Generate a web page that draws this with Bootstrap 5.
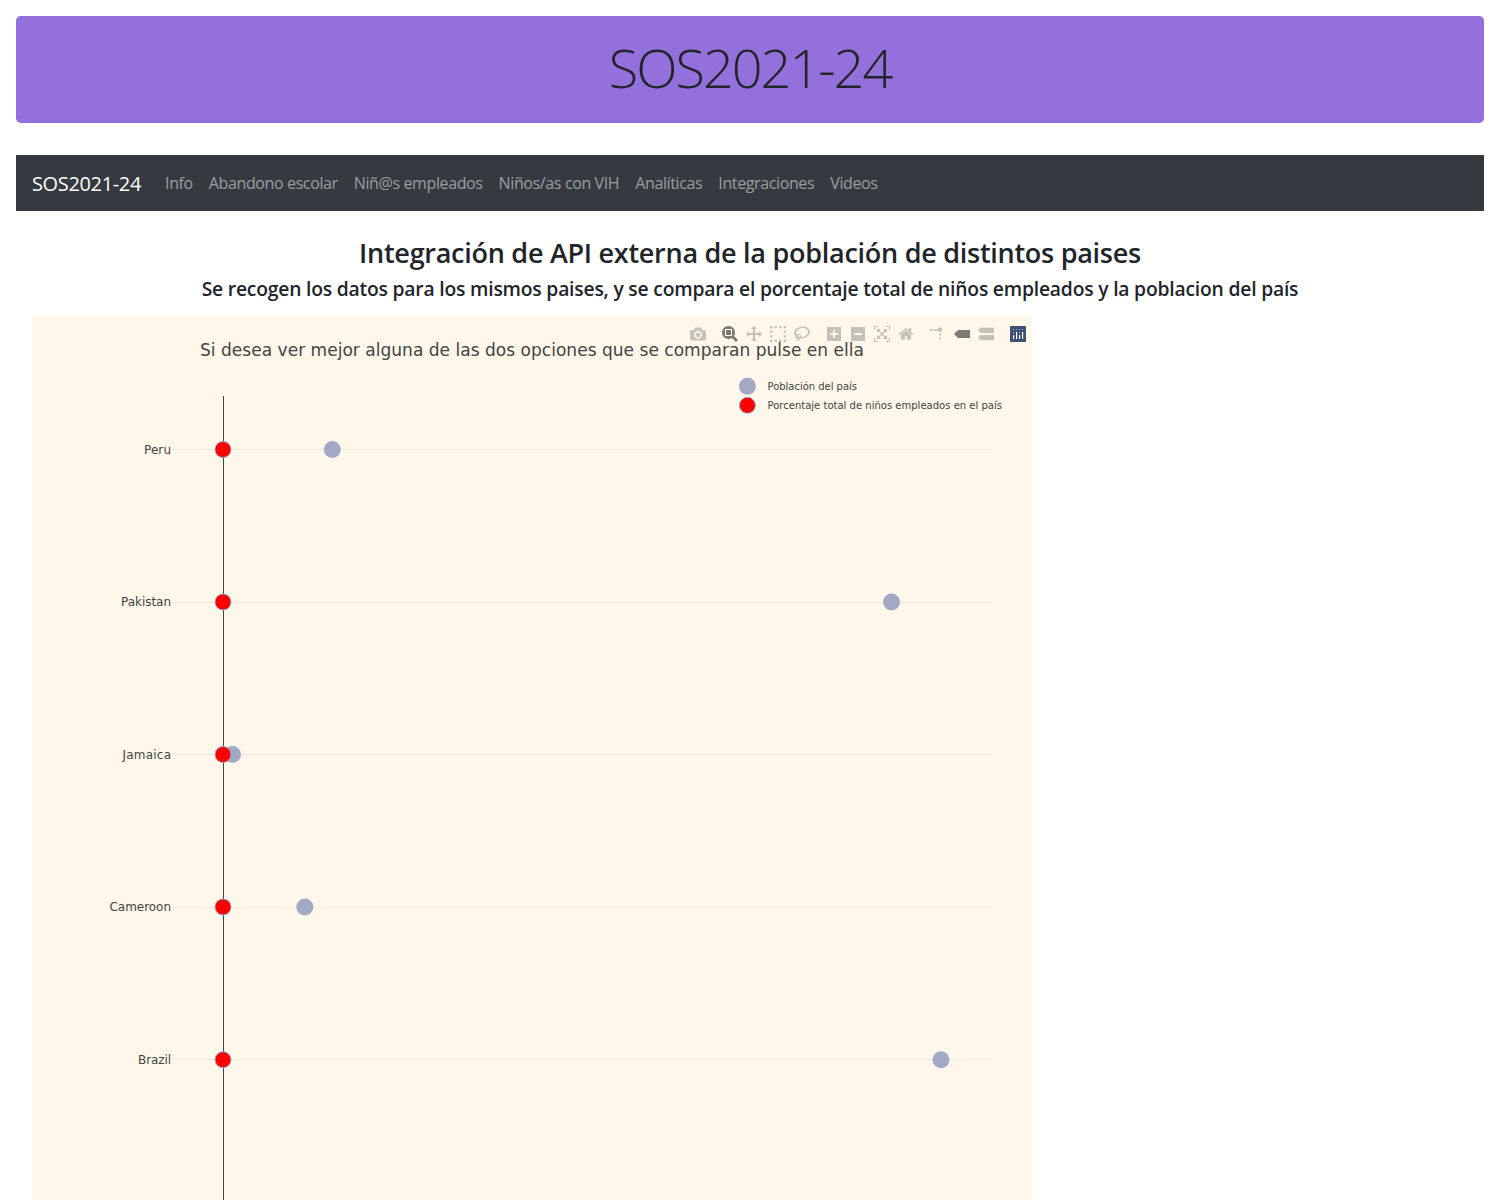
<!DOCTYPE html>
<html lang="es">
<head>
<meta charset="utf-8">
<meta name="viewport" content="width=device-width, initial-scale=1">
<title>SOS2021-24</title>
<link href="https://cdn.jsdelivr.net/npm/bootstrap@5.3.0/dist/css/bootstrap.min.css" rel="stylesheet">
<style>
body{font-family:"Segoe UI","Open Sans","Noto Sans",sans-serif;color:#212529;height:1200px;overflow:hidden}
.hero{background:#9370db;height:107px;border-radius:4.8px;margin-bottom:32px;padding-top:18px}
.hero h1{font-size:54px;font-weight:300;line-height:67px;letter-spacing:-2px}
.topbar{background:#343a40;height:56px}
.topbar .navbar-brand{font-size:20px;letter-spacing:-.35px;margin-right:16px;padding-top:6px;padding-bottom:4px}
.topbar .nav-link{color:rgba(255,255,255,.5);letter-spacing:-.38px;padding-top:8px;padding-bottom:8px}
.content{padding:25px 16px 0}
.content h3{font-size:27px;line-height:33.6px;font-weight:600;letter-spacing:-.27px;margin-bottom:7.4px}
.content h5{font-size:19.3px;line-height:24px;font-weight:600;letter-spacing:-.2px;margin-bottom:15px}
.chart{width:1000px;height:884px;background:#fef7ea}
.chart text{font-family:Verdana,"DejaVu Sans",sans-serif;fill:#444}
.modebar{top:10px;right:6px;gap:16px}
.modebar svg{width:16px;height:16px;display:block;fill:rgba(68,68,68,.3)}
.modebar .group{display:flex;gap:8px}
.modebar svg.on{fill:rgba(68,68,68,.7)}
</style>
<script src="https://cdn.jsdelivr.net/npm/bootstrap@5.3.0/dist/js/bootstrap.bundle.min.js"></script>
</head>
<body class="p-3">
<header class="hero d-flex justify-content-center"><h1 class="m-0">SOS2021-24</h1></header>
<nav class="topbar navbar navbar-expand navbar-dark px-3 py-2">
  <a class="navbar-brand" href="#">SOS2021-24</a>
  <ul class="navbar-nav">
    <li class="nav-item"><a class="nav-link" href="#">Info</a></li>
    <li class="nav-item"><a class="nav-link" href="#">Abandono escolar</a></li>
    <li class="nav-item"><a class="nav-link" href="#">Niñ@s empleados</a></li>
    <li class="nav-item"><a class="nav-link" href="#">Niños/as con VIH</a></li>
    <li class="nav-item"><a class="nav-link" href="#">Analíticas</a></li>
    <li class="nav-item"><a class="nav-link" href="#">Integraciones</a></li>
    <li class="nav-item"><a class="nav-link" href="#">Videos</a></li>
  </ul>
</nav>
<main class="content">
  <h3 class="text-center text-nowrap">Integración de API externa de la población de distintos paises</h3>
  <h5 class="text-center text-nowrap">Se recogen los datos para los mismos paises, y se compara el porcentaje total de niños empleados y la poblacion del país</h5>
  <div class="chart position-relative">
    <svg class="d-block" width="1000" height="884" viewBox="0 0 1000 884">
      <path d="M140 133.5H960M140 286.5H960M140 438.5H960M140 591.5H960M140 743.5H960" stroke="#ece8dc"/>
      <path d="M191.5 80V884" stroke="#444"/>
      <g fill="#a1a9c6">
        <circle cx="300.3" cy="133.5" r="8.5"/><circle cx="859.5" cy="286" r="8.5"/><circle cx="200.5" cy="438.5" r="8.5"/><circle cx="272.8" cy="591" r="8.5"/><circle cx="909" cy="743.7" r="8.5"/>
        <circle cx="715.4" cy="70.3" r="8.5"/>
      </g>
      <g fill="red" stroke="#9ca5c4">
        <circle cx="191" cy="133.5" r="8"/><circle cx="191" cy="286" r="8"/><circle cx="191" cy="438.5" r="8"/><circle cx="191" cy="591" r="8"/><circle cx="191" cy="743.7" r="8"/>
        <circle cx="715.4" cy="89.3" r="8"/>
      </g>
      <g font-size="12">
        <text x="112" y="138" textLength="27">Peru</text>
        <text x="89" y="290" textLength="50">Pakistan</text>
        <text x="90.5" y="443" textLength="48.5">Jamaica</text>
        <text x="77.5" y="595" textLength="61.5">Cameroon</text>
        <text x="106" y="748" textLength="33">Brazil</text>
      </g>
      <text x="168" y="40" font-size="17" textLength="664" lengthAdjust="spacingAndGlyphs">Si desea ver mejor alguna de las dos opciones que se comparan pulse en ella</text>
      <g font-size="10">
        <text x="735.5" y="74" textLength="89.5">Población del país</text>
        <text x="735.5" y="93" textLength="234.5">Porcentaje total de niños empleados en el país</text>
      </g>
    </svg>
    <div class="modebar position-absolute d-flex">
      <div class="group"><svg viewBox="0 0 1000 1000"><path transform="matrix(1 0 0 -1 0 850)" d="m500 450c-83 0-150-67-150-150 0-83 67-150 150-150 83 0 150 67 150 150 0 83-67 150-150 150z m400 150h-120c-16 0-34 13-39 29l-31 93c-6 15-23 28-40 28h-340c-16 0-34-13-39-28l-31-94c-6-15-23-28-40-28h-120c-55 0-100-45-100-100v-450c0-55 45-100 100-100h800c55 0 100 45 100 100v450c0 55-45 100-100 100z m-400-550c-138 0-250 112-250 250 0 138 112 250 250 250 138 0 250-112 250-250 0-138-112-250-250-250z m365 380c-19 0-35 16-35 35 0 19 16 35 35 35 19 0 35-16 35-35 0-19-16-35-35-35z"/></svg></div>
      <div class="group">
        <svg class="on" viewBox="0 0 1000 1000"><path transform="matrix(1 0 0 -1 0 850)" d="m1000-25l-250 251c40 63 63 138 63 218 0 224-182 406-407 406-224 0-406-182-406-406s183-406 407-406c80 0 155 22 218 62l250-250 125 125z m-812 250l0 438 437 0 0-438-437 0z m62 375l313 0 0-312-313 0 0 312z"/></svg>
        <svg viewBox="0 0 1000 1000"><path transform="matrix(1 0 0 -1 0 850)" d="m1000 350l-187 188 0-125-250 0 0 250 125 0-188 187-187-187 125 0 0-250-250 0 0 125-188-188 186-187 0 125 252 0 0-250-125 0 187-188 188 188-125 0 0 250 250 0 0-126 187 188z"/></svg>
        <svg viewBox="0 0 7 7"><path d="M0 0h1v1H0zM2 0h1v1H2zM4 0h1v1H4zM6 0h1v1H6zM0 2h1v1H0zM6 2h1v1H6zM0 4h1v1H0zM6 4h1v1H6zM0 6h1v1H0zM2 6h1v1H2zM4 6h1v1H4zM6 6h1v1H6z"/></svg>
        <svg viewBox="0 0 1031 1000"><path transform="matrix(1 0 0 -1 0 850)" d="m1018 538c-36 207-290 336-568 286-277-48-473-256-436-463 10-57 36-108 76-151-13-66 11-137 68-183 34-28 75-41 114-42l-55-70 0 0c-2-1-3-2-4-3-10-14-8-34 5-45 14-11 34-8 45 4 1 1 2 3 2 5l0 0 113 140c16 11 31 24 45 40 4 3 6 7 8 11 48-3 100 0 151 9 278 48 473 255 436 462z m-624-379c-80 14-149 48-197 96 42 42 109 47 156 9 33-26 47-66 41-105z m-187-74c-19 16-33 37-39 60 50-32 109-55 174-68-42-25-95-24-135 8z m360 75c-34-7-69-9-102-8 8 62-16 128-68 170-73 59-175 54-244-5-9 20-16 40-20 61-28 159 121 317 333 354s407-60 434-217c28-159-121-318-333-355z"/></svg>
      </div>
      <div class="group">
        <svg viewBox="0 0 875 1000"><path transform="matrix(1 0 0 -1 0 850)" d="m1 787l0-875 875 0 0 875-875 0z m687-500l-187 0 0-187-125 0 0 187-188 0 0 125 188 0 0 187 125 0 0-187 187 0 0-125z"/></svg>
        <svg viewBox="0 0 875 1000"><path transform="matrix(1 0 0 -1 0 850)" d="m0 788l0-876 875 0 0 876-875 0z m688-500l-500 0 0 125 500 0 0-125z"/></svg>
        <svg viewBox="0 0 1000 1000"><path transform="matrix(1 0 0 -1 0 850)" d="m250 850l-187 0-63 0 0-62 0-188 63 0 0 188 187 0 0 62z m688 0l-188 0 0-62 188 0 0-188 62 0 0 188 0 62-62 0z m-875-938l0 188-63 0 0-188 0-62 63 0 187 0 0 62-187 0z m875 188l0-188-188 0 0-62 188 0 62 0 0 62 0 188-62 0z m-125 188l-1 0-93-94-156 156 156 156 92-93 2 0 0 250-250 0 0-2 93-92-156-156-156 156 94 92 0 2-250 0 0-250 0 0 93 93 157-156-157-156-93 94 0 0 0-250 250 0 0 0-94 93 156 157 156-157-93-93 0 0 250 0 0 250z"/></svg>
        <svg viewBox="0 0 928.6 1000"><path transform="matrix(1 0 0 -1 0 850)" d="m786 296v-267q0-15-11-26t-25-10h-214v214h-143v-214h-214q-15 0-25 10t-11 26v267q0 1 0 2t0 2l321 264 321-264q1-1 1-4z m124 39l-34-41q-5-5-12-6h-2q-7 0-12 3l-386 322-386-322q-7-4-13-4-7 2-12 7l-35 41q-4 5-3 13t6 12l401 334q18 15 42 15t43-15l136-114v109q0 8 5 13t13 5h107q8 0 13-5t5-13v-227l122-102q5-5 6-12t-4-13z"/></svg>
      </div>
      <div class="group">
        <svg viewBox="0 0 16 16"><path d="M0 3h3v1.700H0zM4 3h2v1.700H4zM9 7.500h2v2H9zM9 11.500h2v2H9z"/><path d="M6 3h2v1.700H6z"/><circle cx="10" cy="3.800" r="2.200"/></svg>
        <svg class="on" viewBox="0 0 1500 1000"><path transform="matrix(1 0 0 -1 0 850)" d="m375 725l0 0-375-375 375-374 0-1 1125 0 0 750-1125 0z"/></svg>
        <svg viewBox="0 0 1125 1000"><path transform="matrix(1 0 0 -1 0 850)" d="m187 786l0 2-187-188 188-187 0 0 937 0 0 373-938 0z m0-499l0 1-187-188 188-188 0 0 937 0 0 376-938-1z"/></svg>
      </div>
      <div class="group"><svg viewBox="0 0 16 16"><rect width="16" height="16" rx=".4" fill="#3f4f75"/><path fill="#fff" d="M3 9h1.200v4H3zM6 6h1.200v7H6zM9 9h1.200v4H9zM12 6h1.200v7H12z"/><path fill="#80cfbe" d="M3 3h1v1H3zM6 3h1v1H6zM9 3h1v1H9zM12 3h1v1h-1zM3 6h1v1H3zM9 6h1v1H9z"/></svg></div>
    </div>
  </div>
</main>
</body>
</html>
